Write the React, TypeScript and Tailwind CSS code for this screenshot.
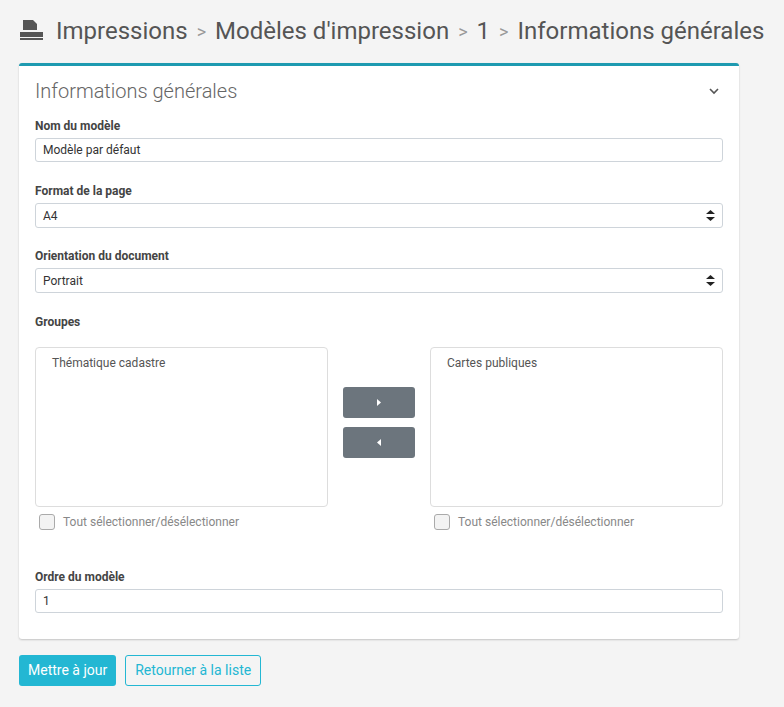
import React from "react";

const Sel = ({ v }: { v: string }) => (
  <div className="h-[25px] border border-[#ced4da] rounded-[3px] bg-white flex items-center justify-between px-[7px] text-[12px] text-[#333]">
    <span>{v}</span>
    <svg width="9" height="11" viewBox="0 0 9 11"><path d="M4.5 0L9 4H0z M4.5 11L0 7h9z" fill="#222" /></svg>
  </div>
);

const Label = ({ t }: { t: string }) => (
  <div className="text-[12px] leading-[16px] font-bold text-[#444] mb-[4px]">{t}</div>
);

const Check = () => (
  <div className="flex items-center gap-[8px] mt-[6px] ml-[4px] text-[12px] text-[#888]">
    <div className="w-[16px] h-[16px] border border-[#aaa] rounded-[3px] bg-[#f3f3f3]" />
    <span>Tout sélectionner/désélectionner</span>
  </div>
);

export default function App() {
  return (
    <div className="min-h-[707px] bg-[#f4f4f4] px-[19px] pt-[16px] pb-[20px]" style={{ fontFamily: "Roboto, sans-serif" }}>
      <div className="flex items-center text-[24px] text-[#555] h-[30px] whitespace-nowrap">
        <svg width="25" height="22" viewBox="0 0 25 22" className="mr-[12px] mt-[-2px]">
          <path d="M4 1h10l4 4v6H4z" fill="#555" />
          <rect x="1" y="13" width="23" height="5" fill="#555" />
          <rect x="1" y="19" width="23" height="2" fill="#555" />
        </svg>
        <span>Impressions</span>
        <span className="text-[#999] text-[18px] mx-[9px]">&gt;</span>
        <span>Modèles d'impression</span>
        <span className="text-[#999] text-[18px] mx-[9px]">&gt;</span>
        <span>1</span>
        <span className="text-[#999] text-[18px] mx-[9px]">&gt;</span>
        <span>Informations générales</span>
      </div>
      <div className="w-[720px] mt-[17px] bg-white border-t-[3px] border-[#1e9ab0] rounded-[3px] shadow-[0_1px_2px_rgba(0,0,0,0.2)] px-[16px] pt-[12px] pb-[26px]">
        <div className="flex items-center justify-between h-[26px]">
          <span className="text-[20px] font-light text-[#666]">Informations générales</span>
          <svg width="10" height="7" viewBox="0 0 10 7" className="mr-[4px]"><path d="M1 1l4 4 4-4" stroke="#555" strokeWidth="1.6" fill="none" /></svg>
        </div>
        <div className="mt-[14px]">
          <Label t="Nom du modèle" />
          <div className="h-[24px] border border-[#ced4da] rounded-[3px] flex items-center px-[7px] text-[12px] text-[#333]">Modèle par défaut</div>
        </div>
        <div className="mt-[21px]">
          <Label t="Format de la page" />
          <Sel v="A4" />
        </div>
        <div className="mt-[20px]">
          <Label t="Orientation du document" />
          <Sel v="Portrait" />
        </div>
        <div className="mt-[21px]">
          <div className="text-[12px] leading-[16px] font-bold text-[#444]">Groupes</div>
          <div className="flex mt-[17px] gap-[15px] items-start">
            <div className="w-[293px]">
              <div className="h-[160px] border border-[#ddd] rounded-[4px] px-[16px] py-[6px] text-[12px] text-[#555]">Thématique cadastre</div>
              <Check />
            </div>
            <div className="w-[72px] flex flex-col gap-[9px] mt-[40px]">
              <div className="h-[31px] bg-[#6c757d] rounded-[3px] flex items-center justify-center">
                <svg width="4" height="7" viewBox="0 0 4 7"><path d="M0 0l4 3.5L0 7z" fill="#fff" /></svg>
              </div>
              <div className="h-[31px] bg-[#6c757d] rounded-[3px] flex items-center justify-center">
                <svg width="4" height="7" viewBox="0 0 4 7"><path d="M4 0L0 3.5 4 7z" fill="#fff" /></svg>
              </div>
            </div>
            <div className="flex-1">
              <div className="h-[160px] border border-[#ddd] rounded-[4px] px-[16px] py-[6px] text-[12px] text-[#555]">Cartes publiques</div>
              <Check />
            </div>
          </div>
        </div>
        <div className="mt-[38px]">
          <Label t="Ordre du modèle" />
          <div className="h-[24px] border border-[#ced4da] rounded-[3px] flex items-center px-[7px] text-[12px] text-[#333]">1</div>
        </div>
      </div>
      <div className="flex gap-[9px] mt-[16px]">
        <div className="h-[31px] px-[9px] bg-[#23b7d3] rounded-[3px] text-white text-[14px] flex items-center">Mettre à jour</div>
        <div className="h-[31px] px-[9px] border border-[#23b7d3] rounded-[3px] text-[#23b7d3] text-[14px] flex items-center">Retourner à la liste</div>
      </div>
    </div>
  );
}
